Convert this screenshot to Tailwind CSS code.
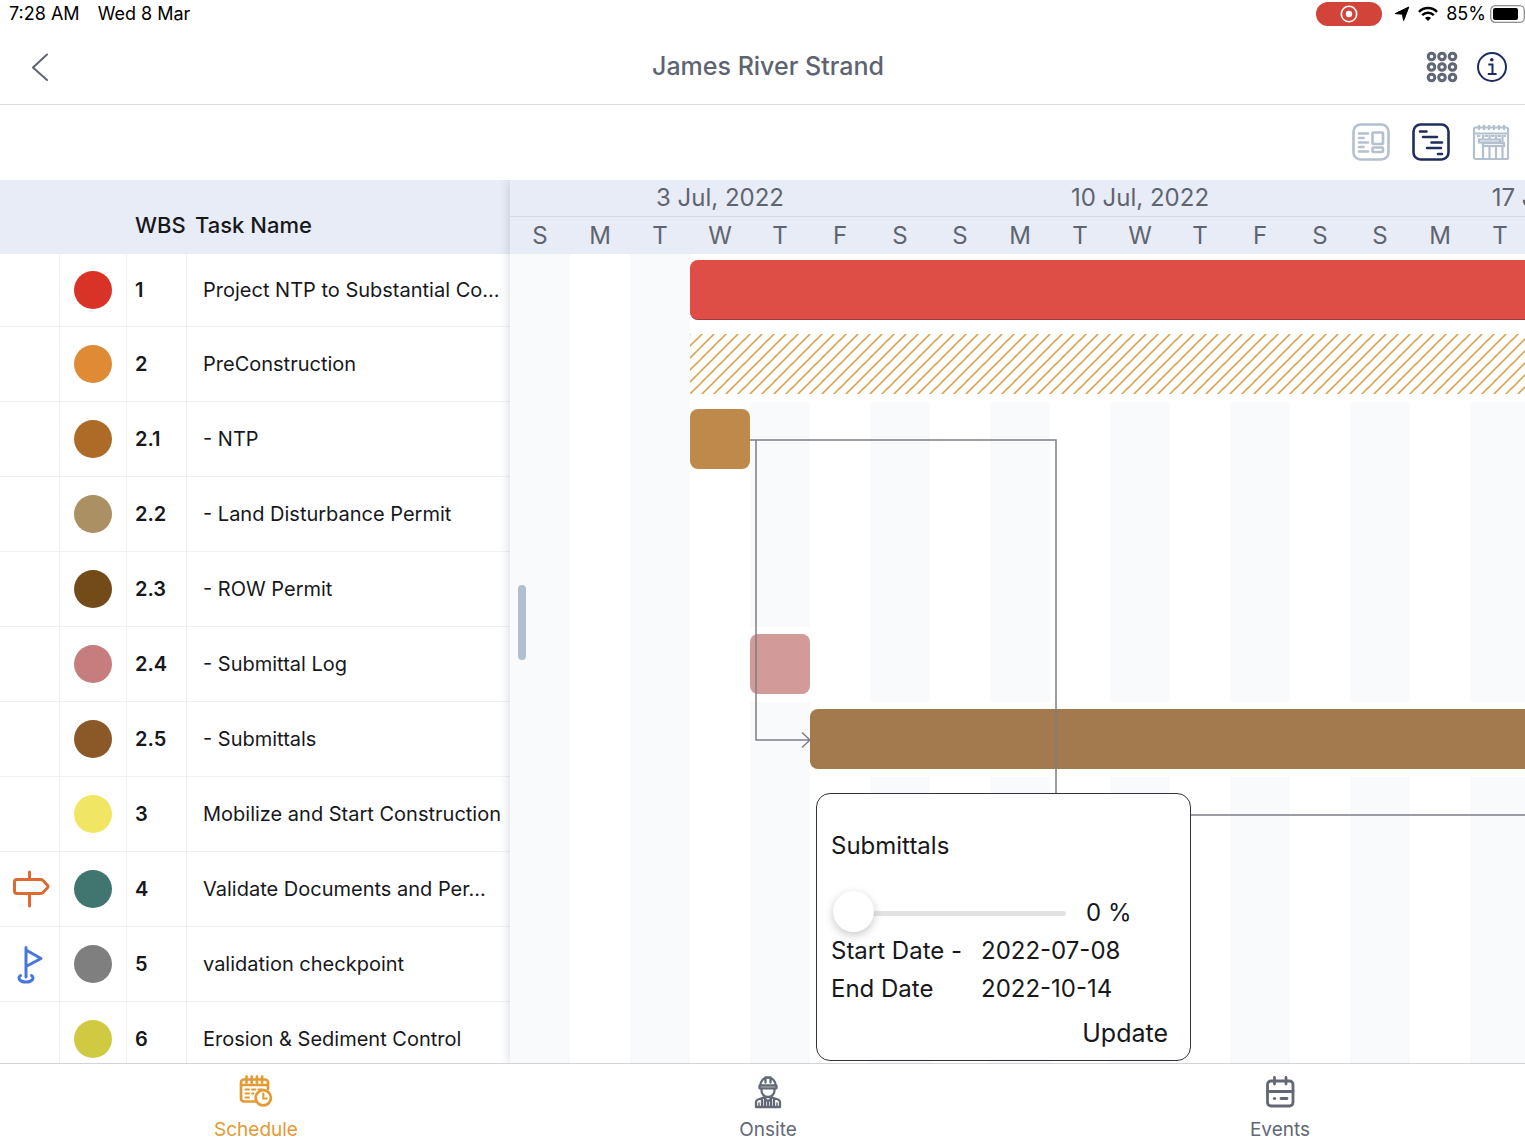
<!DOCTYPE html>
<html lang="en">
<head>
<meta charset="utf-8">
<meta name="viewport" content="width=device-width, initial-scale=1">
<title>James River Strand – Schedule</title>
<script src="https://cdn.jsdelivr.net/npm/@tailwindcss/browser@4"></script>
</head>
<body class="h-screen overflow-hidden bg-white font-['Inter',sans-serif] text-[#17181c]">
<div class="flex h-full w-[calc(100%+11px)] flex-col">

  <!-- Device status bar -->
  <div class="flex h-7 shrink-0 items-center pr-2.5 pl-[9px] text-lg leading-7 text-black">
    <span>7:28 AM</span>
    <span class="ml-[18px]">Wed 8 Mar</span>
    <span class="ml-auto flex h-6 w-[66px] items-center justify-center rounded-full bg-[#d2443a]">
      <svg class="size-[18px]" viewBox="0 0 18 18" fill="none"><circle cx="9" cy="9" r="7.7" stroke="#fff" stroke-width="1.6"/><circle cx="9" cy="9" r="3.2" fill="#fff"/></svg>
    </span>
    <svg class="ml-3 size-4" viewBox="0 0 16 16"><path d="M14.8 1 9.6 14.6 8.4 8.2 1.2 7.6Z" fill="#000" stroke="#000" stroke-linejoin="round"/></svg>
    <svg class="ml-2 h-4 w-5" viewBox="0 0 20 16" fill="none" stroke="#000" stroke-width="2.4"><path d="M1 5.8a12.7 12.7 0 0 1 18 0M4.2 9.1a8.2 8.2 0 0 1 11.6 0"/><path d="M10 15 7 11.9a4.2 4.2 0 0 1 6 0Z" fill="#000" stroke="none"/></svg>
    <span class="ml-2">85%</span>
    <svg class="ml-1 h-[18px] w-9" viewBox="0 0 36 18"><rect x=".7" y=".7" width="33.6" height="16.6" rx="4.6" fill="none" stroke="#8d8d8d" stroke-width="1.3"/><rect x="3" y="3" width="25" height="12" rx="2" fill="#000"/></svg>
  </div>

  <!-- Title bar -->
  <header class="grid h-[77px] shrink-0 grid-cols-[1fr_auto_1fr] items-center border-b border-[#dcdcdc] pt-px pr-7 pl-7">
    <button type="button" aria-label="Back" class="w-6">
      <svg class="h-8 w-6" viewBox="0 0 24 32" fill="none" stroke="#5d6472" stroke-width="2" stroke-linecap="round" stroke-linejoin="round"><path d="M19 3.500 5 16.500 19 29"/></svg>
    </button>
    <h1 class="text-[25px] font-medium text-[#5d6370]">James River Strand</h1>
    <div class="flex items-center gap-[18px] justify-self-end">
      <button type="button" aria-label="Apps">
        <svg class="size-8" viewBox="0 0 32 32" fill="none" stroke="#606776" stroke-width="3">
          <circle cx="5.500" cy="5.500" r="3.300"/><circle cx="16" cy="5.500" r="3.300"/><circle cx="26.500" cy="5.500" r="3.300"/>
          <circle cx="5.500" cy="16" r="3.300"/><circle cx="16" cy="16" r="3.300"/><circle cx="26.500" cy="16" r="3.300"/>
          <circle cx="5.500" cy="26.500" r="3.300"/><circle cx="16" cy="26.500" r="3.300"/><circle cx="26.500" cy="26.500" r="3.300"/>
        </svg>
      </button>
      <button type="button" aria-label="Information">
        <svg class="size-8" viewBox="0 0 32 32" fill="none" stroke="#1c2b63" stroke-width="2"><circle cx="16" cy="16" r="14"/><path d="M12.300 13.500H16.500V22.800M11.800 23H20.600"/><circle cx="15.800" cy="8.800" r="1.800" fill="#1c2b63" stroke="none"/></svg>
      </button>
    </div>
  </header>

  <!-- View switcher -->
  <div class="flex h-[75px] shrink-0 items-center justify-end gap-[22px] pr-[26px] pb-px">
    <button type="button" aria-label="Board view">
      <svg class="size-[38px]" viewBox="0 0 38 38" fill="none" stroke="#b3c0d0" stroke-width="2.600" stroke-linecap="round"><rect x="1.500" y="1.500" width="35" height="35" rx="7"/><path d="M7 10.500h9M7 15h4.500M7 19.500h9M7 24h4.500M7 28.500h9"/><rect x="20.500" y="9.500" width="10.500" height="11.500" rx="1"/><rect x="20.500" y="24.500" width="10.500" height="4.500" rx="1"/></svg>
    </button>
    <button type="button" aria-label="Gantt view" aria-pressed="true">
      <svg class="size-[38px]" viewBox="0 0 38 38" fill="none" stroke="#1f2e5c" stroke-width="2.600" stroke-linecap="round"><rect x="1.500" y="1.500" width="35" height="35" rx="7"/><path d="M8 8.500h6.500M11 14h14M19.500 19.500H30M15 25h14M26 31h4"/></svg>
    </button>
    <button type="button" aria-label="Calendar view">
      <svg class="size-[38px]" viewBox="0 0 38 38" fill="none" stroke="#b3c0d0" stroke-width="2.200"><rect x="2" y="4.500" width="34" height="31.500" rx="1.500"/><path d="M2 10.500h34M7 2v5M12 2v5M17 2v5M22 2v5M27 2v5M32 2v5M11 12v24M17.500 12v24M24 12v24M30.500 12v24"/><path d="M5 13h3.500M12.500 13h3.500M19 13h3.500M25.500 13h3.500M31.500 13h2.500"/><rect x="7" y="16.500" width="21" height="3" fill="#fff"/><rect x="11" y="20" width="21" height="3" fill="#fff"/></svg>
    </button>
  </div>

  <main class="flex min-h-0 flex-1 overflow-hidden">

    <!-- Task list -->
    <section class="w-[510px] shrink-0 overflow-hidden">
      <table class="w-full table-fixed border-separate border-spacing-0 text-left">
        <colgroup><col class="w-[60px]"><col class="w-[67px]"><col class="w-[60px]"><col></colgroup>
        <thead>
          <tr class="h-[74px] bg-[#e8ecf6] text-[22px]/8">
            <th class="p-0" aria-label="Marker"></th>
            <th class="p-0" aria-label="Colour"></th>
            <th class="p-0 pt-4 pl-2 font-medium">WBS</th>
            <th class="p-0 pt-4 pl-2 font-medium">Task Name</th>
          </tr>
        </thead>
        <tbody id="tasks" class="text-xl"></tbody>
      </table>
    </section>

    <!-- Gantt chart -->
    <section class="relative z-10 min-w-0 flex-1 shadow-[-1px_0_9px_rgba(70,85,120,0.22)]">
      <div class="h-full overflow-hidden bg-white">
        <div class="bg-[#e8ecf6] text-2xl text-[#5f6471]">
          <div class="grid h-[37px] grid-cols-[repeat(3,420px)] items-center border-b border-[#d3d8e1] text-center">
            <span>3 Jul, 2022</span><span>10 Jul, 2022</span><span>17 Jul, 2022</span>
          </div>
          <div id="days" class="grid h-[37px] grid-cols-[repeat(18,60px)] items-center text-center"></div>
        </div>
        <div id="bars" class="bg-[repeating-linear-gradient(90deg,#f9fafc_0_60px,#fff_60px_120px)]"></div>
      </div>

      <!-- Dependency lines -->
      <svg class="pointer-events-none absolute top-0 left-0 h-full w-full" fill="none" stroke="#7c7f86" stroke-width="1.500">
        <path d="M240 260H546V635H1030"/>
        <path d="M246 260V560H300M292 552.500 300 560 292 567.500"/>
      </svg>

      <div class="absolute top-[405px] left-2 h-[75px] w-2 rounded-full bg-[#b0c0d0]"></div>

      <!-- Task details -->
      <form class="absolute top-[613px] left-[306px] w-[375px] rounded-[14px] border border-[#33343a] bg-white px-3.5 pt-[33px] pb-2 text-2xl/[38px]">
        <h2>Submittals</h2>
        <div class="mt-[29px] flex h-[38px] items-center">
          <input type="range" min="0" max="100" value="0" aria-label="Progress" class="ml-0.5 h-[42px] w-[233px] appearance-none bg-transparent [&::-webkit-slider-runnable-track]:h-[5px] [&::-webkit-slider-runnable-track]:rounded-full [&::-webkit-slider-runnable-track]:bg-[#e3e3e4] [&::-webkit-slider-thumb]:-mt-5 [&::-webkit-slider-thumb]:size-[41px] [&::-webkit-slider-thumb]:appearance-none [&::-webkit-slider-thumb]:rounded-full [&::-webkit-slider-thumb]:bg-white [&::-webkit-slider-thumb]:shadow-[0_3px_10px_rgba(0,0,0,0.22)]">
          <output class="ml-5">0 %</output>
        </div>
        <dl class="grid grid-cols-[150px_1fr]">
          <dt>Start Date -</dt><dd>2022-07-08</dd>
          <dt>End Date</dt><dd>2022-10-14</dd>
        </dl>
        <button type="button" class="mt-1.5 mr-2 ml-auto block text-[25px]/[38px]">Update</button>
      </form>
    </section>
  </main>

  <!-- Tab bar -->
  <nav class="grid h-[84px] shrink-0 grid-cols-3 border-t border-[#d3d3d5] bg-white text-[19px]/7 text-[#636876]">
    <a href="#schedule" aria-current="page" class="flex flex-col items-center pt-2.5 text-[#e39a33]">
      <svg class="size-9" viewBox="0 0 36 36" fill="none" stroke="currentColor" stroke-width="2.700" stroke-linecap="round"><path d="M17 27.500H6a3 3 0 0 1-3-3V8.500a3 3 0 0 1 3-3H27a3 3 0 0 1 3 3V15M3 11H30M8.500 2.500v6M13.700 2.500v6M18.900 2.500v6M24.100 2.500v6"/><path d="M7.500 15.500h3.500M14 15.500h3.500M20.500 15.500h3.500M7.500 19.500h3.500M14 19.500h1.500M7.500 23.500h3.500" stroke-width="2"/><circle cx="25.300" cy="23.800" r="7.600"/><path d="M25.300 19.500v5h3.500" stroke-width="2"/></svg>
      <span class="mt-1.5">Schedule</span>
    </a>
    <a href="#onsite" class="flex flex-col items-center pt-2.5">
      <svg class="size-9" viewBox="0 0 36 36" fill="none" stroke="currentColor" stroke-width="2.300" stroke-linejoin="round" stroke-linecap="round"><path d="M10.500 11a7.500 7.500 0 0 1 15 0M9.500 11.500h17v2.800h-17ZM15.500 3.500v5M20.500 3.500v5M15.500 3.500h5"/><path d="M11.500 15v1.500a6.500 6.500 0 0 0 13 0V15M14.500 22v2L18 27.500 21.500 24v-2M14 23.500l-6 2a3 3 0 0 0-2 3V33H30v-4.500a3 3 0 0 0-2-3l-6-2M18 27.500V33M12 25v8M24 25v8M15 26v7M21 26v7"/><path d="M9 29v4M27 29v4" stroke-width="1.500"/></svg>
      <span class="mt-1.5">Onsite</span>
    </a>
    <a href="#events" class="flex flex-col items-center pt-2.5">
      <svg class="size-9" viewBox="0 0 36 36" fill="none" stroke="currentColor" stroke-width="2.800" stroke-linecap="round"><rect x="5.500" y="7" width="25.500" height="25" rx="3.500"/><path d="M5.500 17.500H31M12.500 3.500v6.500M24 3.500v6.500M19 24.500h6"/><circle cx="12.500" cy="24.500" r="1.600" fill="currentColor" stroke="none"/></svg>
      <span class="mt-1.5">Events</span>
    </a>
  </nav>
</div>

<script>
const signpost = '<svg class="mx-auto size-10" viewBox="0 0 40 40" fill="none" stroke="#dd6a33" stroke-width="3" stroke-linecap="round" stroke-linejoin="round"><path d="M19.500 3V10M19.500 25V37M7 10.500H30.500Q32 10.500 33 11.500L37.500 16.200Q38.500 17.500 37.500 18.800L33 23.500Q32 24.500 30.500 24.500H7A2.500 2.500 0 0 1 4.500 22V13A2.500 2.500 0 0 1 7 10.500Z"/></svg>';
const flag = '<svg class="mx-auto size-10" viewBox="0 0 40 40" fill="none" stroke="#4877db" stroke-width="3" stroke-linecap="round" stroke-linejoin="round"><path d="M16 33V3.500M16 6 31 14.500 16 22.500"/><path d="M10.500 31.500C7 34 10 38 16 38s9-4 5.500-6.500"/></svg>';
const hatch = '<svg class="h-[60px] w-full"><defs><pattern id="hatch" width="12" height="12" patternUnits="userSpaceOnUse"><path d="M-1 13 13-1M-1 1 1-1M11 13 13 11" stroke="#d9a856" stroke-width="1.600"/></pattern></defs><rect width="100%" height="100%" fill="url(#hatch)"/></svg>';

// start is the first day column of the bar, span its length in days
const tasks = [
  { wbs: '1', name: 'Project NTP to Substantial Co...', dot: '#d93327', start: 4, span: 15, bar: '#de4d46', edge: true },
  { wbs: '2', name: 'PreConstruction', dot: '#df8a34', start: 4, span: 15, hatch: true },
  { wbs: '2.1', name: '- NTP', dot: '#ae6b28', start: 4, span: 1, bar: '#be8a4b' },
  { wbs: '2.2', name: '- Land Disturbance Permit', dot: '#aa9062' },
  { wbs: '2.3', name: '- ROW Permit', dot: '#734b18' },
  { wbs: '2.4', name: '- Submittal Log', dot: '#c77d7d', start: 5, span: 1, bar: '#d29b9a' },
  { wbs: '2.5', name: '- Submittals', dot: '#8b5828', start: 6, span: 13, bar: '#a27a4e' },
  { wbs: '3', name: 'Mobilize and Start Construction', dot: '#f1e663' },
  { wbs: '4', name: 'Validate Documents and Per...', dot: '#41756f', icon: signpost },
  { wbs: '5', name: 'validation checkpoint', dot: '#7f7f7f', icon: flag },
  { wbs: '6', name: 'Erosion & Sediment Control', dot: '#d0ca43' },
];

document.getElementById('days').innerHTML =
  [...'SMTWTFSSMTWTFSSMTW'].map(d => `<span>${d}</span>`).join('');

document.getElementById('tasks').innerHTML = tasks.map((t, i) => `
  <tr class="${i ? 'h-[75px]' : 'h-[73px]'}">
    <td class="border-r border-b border-[#eff0f3] p-0">${t.icon || ''}</td>
    <td class="border-r border-b border-[#eff0f3] p-0"><div class="mx-auto size-[38px] rounded-full" style="background:${t.dot}"></div></td>
    <td class="border-r border-b border-[#eff0f3] p-0 pl-2 font-semibold">${t.wbs}</td>
    <td class="overflow-hidden border-b border-[#eff0f3] p-0 pl-4 whitespace-nowrap">${t.name.replace('&', '&amp;')}</td>
  </tr>`).join('');

document.getElementById('bars').innerHTML = tasks.map((t, i) => `
  <div class="grid grid-cols-[repeat(18,60px)] ${i ? 'h-[75px]' : 'h-[73px]'}">
    ${t.start ? `<div class="flex items-center bg-white pb-px" style="grid-column:${t.start} / span ${t.span}">
      ${t.hatch ? hatch : `<div class="h-[60px] w-full rounded-lg ${t.edge ? 'border-b border-[#a33a38]' : ''}" style="background-color:${t.bar}"></div>`}
    </div>` : ''}
  </div>`).join('');
</script>
</body>
</html>
